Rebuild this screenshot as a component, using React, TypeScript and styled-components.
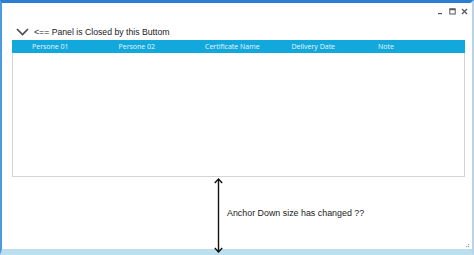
import styled, { createGlobalStyle } from 'styled-components';

const GlobalStyle = createGlobalStyle`
  html, body {
    margin: 0;
    padding: 0;
    background: #ffffff;
  }
  body {
    font-family: Arial, 'Liberation Sans', sans-serif;
  }
`;

const columns = ['Persone 01', 'Persone 02', 'Certificate Name', 'Delivery Date', 'Note'];

export default function App() {
  return (
    <>
      <GlobalStyle />
      <Frame>
        <Window>
          <TitleBar>
            <Control title='minimize'>
              <svg width='7' height='7' viewBox='0 0 7 7'>
                <rect x='1' y='5' width='4' height='1.2' fill='#555' />
              </svg>
            </Control>
            <Control title='maximize'>
              <svg width='7' height='7' viewBox='0 0 7 7'>
                <rect x='0.8' y='0.8' width='5.4' height='5.2' fill='none' stroke='#555' strokeWidth='1' />
                <rect x='0.8' y='0.8' width='5.4' height='1.4' fill='#555' />
              </svg>
            </Control>
            <Control title='close'>
              <svg width='7' height='7' viewBox='0 0 7 7'>
                <path d='M1 1 L6 6 M6 1 L1 6' stroke='#555' strokeWidth='1.2' />
              </svg>
            </Control>
          </TitleBar>

          <Body>
            <PanelHead>
              <Chevron width='13' height='8' viewBox='0 0 13 8'>
                <path d='M1 1 L6.5 6.5 L12 1' fill='none' stroke='#4a4a4a' strokeWidth='1.6' />
              </Chevron>
              <PanelLabel>&lt;== Panel is Closed by this Buttom</PanelLabel>
            </PanelHead>

            <Grid>
              <GridHeader>
                {columns.map((c) => (
                  <HeaderCell key={c}>{c}</HeaderCell>
                ))}
              </GridHeader>
            </Grid>

            <AnchorRow>
              <Arrow width='9' height='75' viewBox='0 0 9 75'>
                <path d='M4.5 1 L4.5 74' stroke='#111' strokeWidth='1.4' />
                <path d='M0.8 5 L4.5 1 L8.2 5' fill='none' stroke='#111' strokeWidth='1.4' />
                <path d='M0.8 70 L4.5 74 L8.2 70' fill='none' stroke='#111' strokeWidth='1.4' />
              </Arrow>
              <AnchorText>Anchor Down size has changed ??</AnchorText>
            </AnchorRow>
          </Body>
          <Grip width='6' height='6' viewBox='0 0 6 6'>
            <rect x='4' y='4' width='1.2' height='1.2' fill='#9aa' />
            <rect x='2' y='4' width='1.2' height='1.2' fill='#9aa' />
            <rect x='4' y='2' width='1.2' height='1.2' fill='#9aa' />
          </Grip>
        </Window>
      </Frame>
    </>
  );
}

const Frame = styled.div`
  width: 474px;
  height: 255px;
  box-sizing: border-box;
  border-top: 3px solid #2a7fd4;
  border-left: 2px solid #4b9be0;
  border-right: 4px solid #b8d3ea;
  border-bottom: 6px solid #bcdff0;
  display: flex;
`;

const Window = styled.div`
  position: relative;
  flex: 1;
  background: #ffffff;
  display: flex;
  flex-direction: column;
`;

const TitleBar = styled.div`
  flex-shrink: 0;
  height: 16px;
  display: flex;
  justify-content: flex-end;
  align-items: center;
  gap: 5px;
  padding-right: 4px;
  box-sizing: border-box;
`;

const Control = styled.div`
  width: 7px;
  height: 7px;
  display: flex;
`;

const Body = styled.div`
  flex: 1;
  min-height: 0;
  display: flex;
  flex-direction: column;
  padding: 0 7px 0 10px;
`;

const PanelHead = styled.div`
  flex-shrink: 0;
  display: flex;
  align-items: center;
  gap: 5px;
  height: 21px;
  padding-left: 4px;
  padding-top: 4px;
  box-sizing: border-box;
`;

const Chevron = styled.svg`
  display: block;
`;

const PanelLabel = styled.span`
  font-size: 8.7px;
  color: #1a1a1a;
`;

const Grid = styled.div`
  flex-shrink: 0;
  height: 137px;
  border: 1px solid #d4d4d4;
  border-top: none;
  box-sizing: border-box;
`;

const GridHeader = styled.div`
  height: 13px;
  margin: 0 -1px;
  background: #13a8dc;
  display: grid;
  grid-template-columns: repeat(5, 86.5px);
  padding-left: 20px;
  align-items: center;
`;

const HeaderCell = styled.div`
  font-family: 'Open Sans', 'DejaVu Sans', sans-serif;
  font-size: 7px;
  color: #e6f6fc;
  white-space: nowrap;
`;

const AnchorRow = styled.div`
  flex: 1;
  min-height: 0;
  display: flex;
  align-items: center;
  padding-left: 202px;
  gap: 4px;
`;

const Arrow = styled.svg`
  display: block;
  flex-shrink: 0;
  align-self: flex-start;
  margin-top: 1px;
`;

const AnchorText = styled.span`
  font-size: 8.9px;
  color: #1a1a1a;
`;

const Grip = styled.svg`
  position: absolute;
  right: 2px;
  bottom: 1px;
`;
